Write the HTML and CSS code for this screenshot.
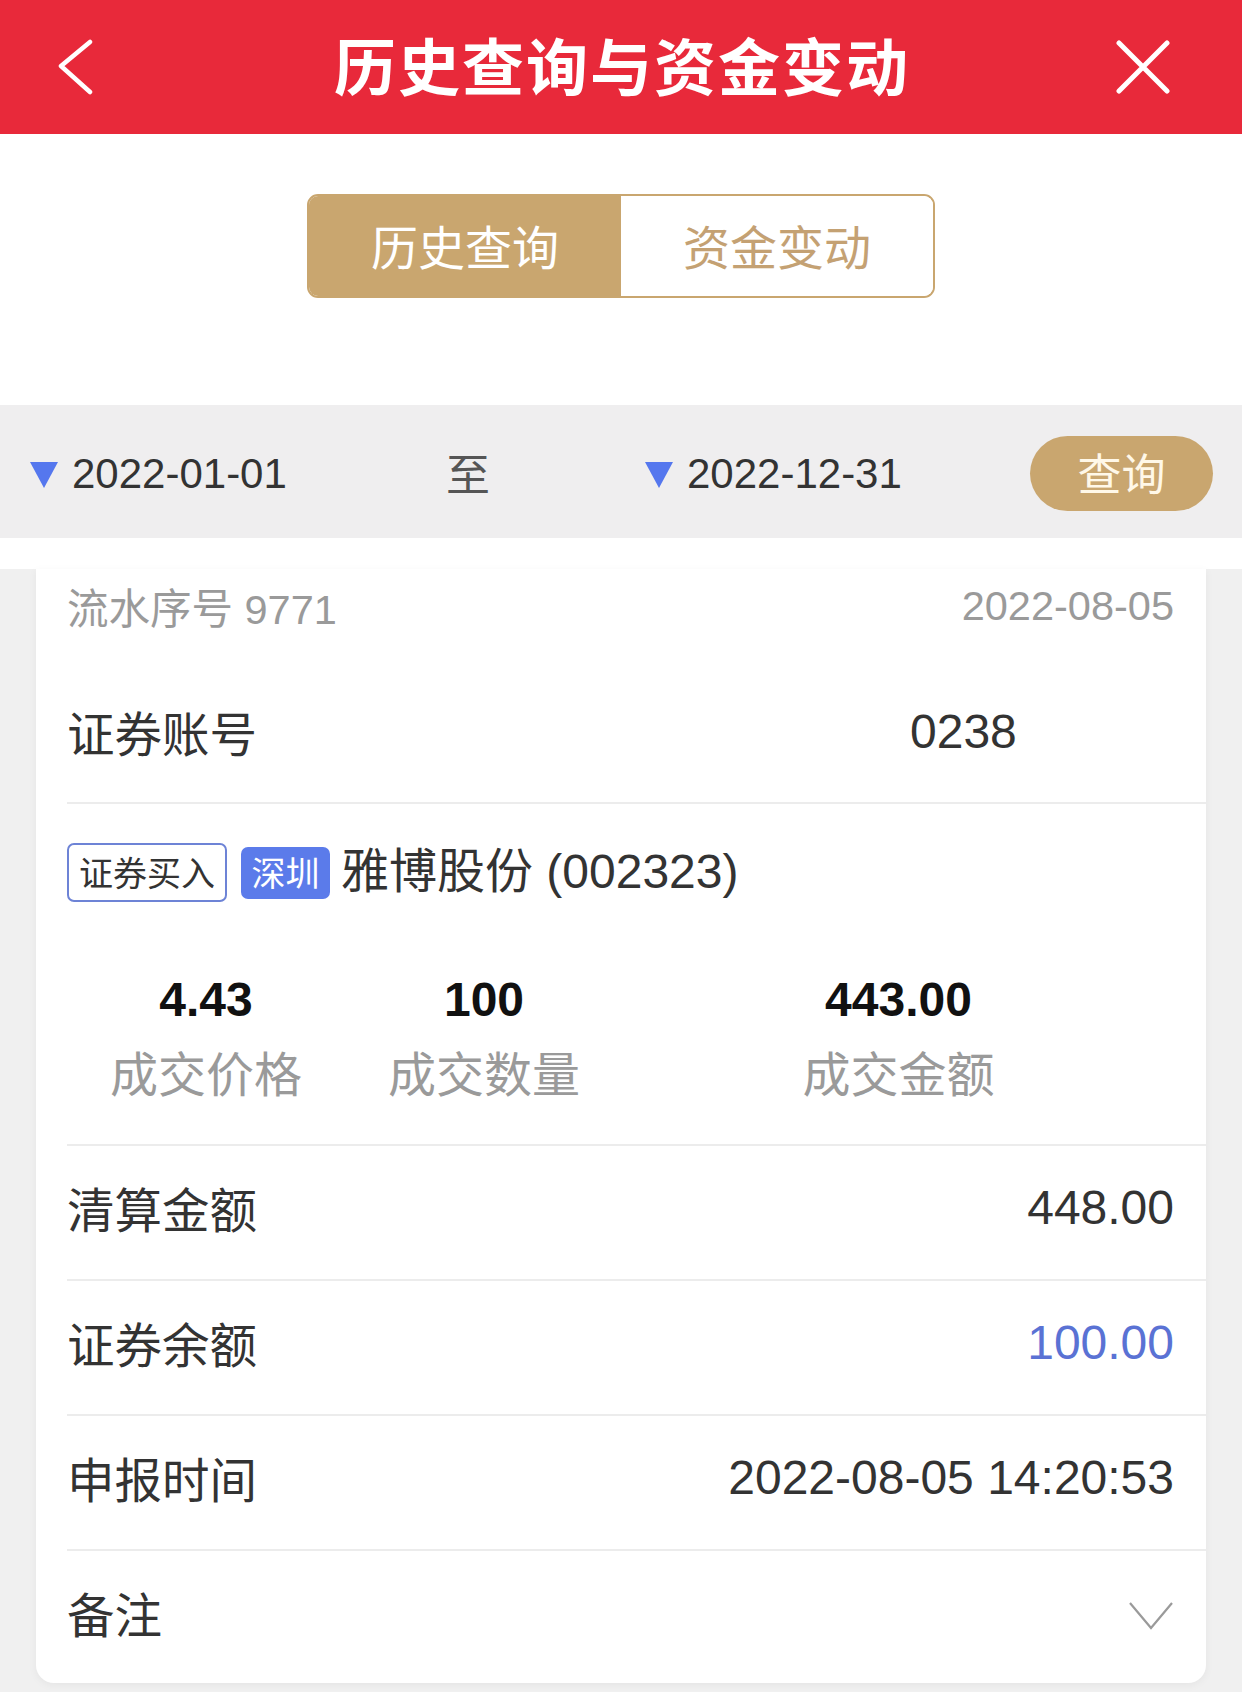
FILE: index.html
```html
<!DOCTYPE html>
<html lang="zh-CN">
<head>
<meta charset="utf-8">
<title>历史查询与资金变动</title>
<link rel="stylesheet" href="styles.css">
</head>
<body>
<header class="topbar">
  <span class="icon-btn back">
    <svg width="40" height="56" viewBox="0 0 40 56"><path d="M33 3 L4 27 L33 53" fill="none" stroke="#fff" stroke-width="4.5" stroke-linecap="round" stroke-linejoin="round"/></svg>
  </span>
  <h1 class="title">历史查询与资金变动</h1>
  <span class="icon-btn close">
    <svg width="54" height="54" viewBox="0 0 54 54"><path d="M3 3 L51 51 M51 3 L3 51" fill="none" stroke="#fff" stroke-width="5" stroke-linecap="round"/></svg>
  </span>
</header>

<section class="seg-wrap">
  <div class="segment">
    <div class="seg-item active">历史查询</div>
    <div class="seg-item">资金变动</div>
  </div>
</section>

<section class="filter">
  <div class="date-pick"><span class="tri"></span><span class="date">2022-01-01</span></div>
  <div class="to">至</div>
  <div class="date-pick"><span class="tri"></span><span class="date">2022-12-31</span></div>
  <div class="query-btn">查询</div>
</section>

<div class="spacer"></div>

<main class="list">
  <article class="card">
    <div class="card-head">
      <span>流水序号 9771</span>
      <span>2022-08-05</span>
    </div>
    <div class="row account">
      <span class="label">证券账号</span>
      <span class="value">0238</span>
    </div>
    <div class="row stock">
      <div class="stock-line">
        <span class="tag tag-outline">证券买入</span>
        <span class="tag tag-fill">深圳</span>
        <span class="stock-name">雅博股份 (002323)</span>
      </div>
      <div class="stats">
        <div class="stat"><div class="num">4.43</div><div class="cap">成交价格</div></div>
        <div class="stat"><div class="num">100</div><div class="cap">成交数量</div></div>
        <div class="stat wide"><div class="num">443.00</div><div class="cap">成交金额</div></div>
      </div>
    </div>
    <div class="row line">
      <span class="label">清算金额</span>
      <span class="value">448.00</span>
    </div>
    <div class="row line">
      <span class="label">证券余额</span>
      <span class="value blue">100.00</span>
    </div>
    <div class="row line">
      <span class="label">申报时间</span>
      <span class="value">2022-08-05 14:20:53</span>
    </div>
    <div class="row line last">
      <span class="label">备注</span>
      <svg class="chev" width="46" height="30" viewBox="0 0 46 30"><path d="M2 2 L23 27 L44 2" fill="none" stroke="#9a9a9a" stroke-width="2.2"/></svg>
    </div>
  </article>
</main>
</body>
</html>
```

FILE: styles.css
```css
* { box-sizing: border-box; }
html, body { margin: 0; padding: 0; }
body {
  width: 1242px;
  height: 1692px;
  overflow: hidden;
  background: #fff;
  font-family: "Liberation Sans", "Noto Sans CJK SC", sans-serif;
  color: #333;
}

.topbar {
  height: 134px;
  background: #e8293a;
  display: grid;
  grid-template-columns: 1fr auto 1fr;
  align-items: center;
  padding: 0 57px;
}
.icon-btn { display: flex; }
.back { justify-self: start; }
.close { justify-self: end; margin-right: 15px; }
.title {
  margin: 0;
  color: #fff;
  font-family: "Noto Sans CJK SC", sans-serif;
  font-size: 62px;
  font-weight: 700;
  letter-spacing: 2px;
  text-indent: 2px;
  line-height: 1;
  padding-bottom: 6px;
}

.seg-wrap {
  height: 271px;
  padding-top: 60px;
  display: flex;
  justify-content: center;
  align-items: flex-start;
}
.segment {
  width: 628px;
  height: 104px;
  border: 2px solid #c9a66f;
  border-radius: 11px;
  overflow: hidden;
  display: flex;
}
.seg-item {
  flex: 1;
  display: flex;
  align-items: center;
  justify-content: center;
  font-family: "Noto Sans CJK SC", sans-serif;
  font-size: 47px;
  color: #c4a173;
  background: #fff;
  padding-bottom: 4px;
}
.seg-item.active {
  background: #c9a66f;
  color: #fff;
}

.filter {
  height: 133px;
  background: #efeeef;
  display: grid;
  grid-template-columns: 416px 199px 1fr 183px;
  align-items: center;
  padding: 4px 29px 0 30px;
}
.date-pick { display: flex; align-items: center; gap: 14px; }
.tri {
  width: 0; height: 0;
  border-left: 14px solid transparent;
  border-right: 14px solid transparent;
  border-top: 26px solid #5577ee;
  margin-top: 2px;
}
.date { font-size: 42px; color: #333; }
.to {
  font-family: "Noto Sans CJK SC", sans-serif;
  font-size: 44px;
  color: #555;
  padding-bottom: 4px;
}
.query-btn {
  height: 75px;
  border-radius: 38px;
  background: #c9a66f;
  color: #fff8e8;
  font-family: "Noto Sans CJK SC", sans-serif;
  font-size: 44px;
  display: flex;
  align-items: center;
  justify-content: center;
  padding-bottom: 4px;
}

.spacer { height: 31px; background: #fff; }

.list {
  background: #f0f0f0;
  padding: 0 36px 9px;
}
.card {
  background: #fff;
  border-radius: 0 0 18px 18px;
  box-shadow: 0 2px 8px rgba(0,0,0,0.05);
}
.card-head {
  height: 97px;
  padding: 0 32px 24px 31px;
  display: flex;
  justify-content: space-between;
  align-items: center;
  font-size: 41.5px;
  color: #9a9a9a;
}

.row {
  margin-left: 31px;
  padding-right: 32px;
  border-bottom: 2px solid #ececec;
}
.label {
  font-family: "Noto Sans CJK SC", sans-serif;
  font-size: 47.5px;
  color: #333;
}
.value { font-size: 48px; color: #333; }
.value.blue { color: #5a72d4; }

.account {
  height: 138px;
  padding-bottom: 6px;
  display: grid;
  grid-template-columns: 843px 1fr;
  align-items: center;
}

.stock {
  height: 342px;
  padding-top: 39px;
}
.stock-line {
  display: flex;
  align-items: center;
  height: 59px;
}
.tag {
  font-family: "Noto Sans CJK SC", sans-serif;
  font-size: 34px;
  border-radius: 7px;
  display: flex;
  align-items: center;
  justify-content: center;
  padding-bottom: 3px;
}
.tag-outline {
  width: 160px;
  height: 59px;
  border: 2px solid #6d83d6;
  color: #333;
}
.tag-fill {
  width: 89px;
  height: 52px;
  margin-left: 14px;
  background: #5b7bea;
  color: #fff;
}
.stock-name {
  margin-left: 11px;
  font-size: 48px;
  color: #333;
  margin-top: -12px;
}
.stats {
  display: flex;
  margin-top: 73px;
}
.stat {
  width: 278px;
  display: flex;
  flex-direction: column;
  align-items: center;
}
.stat.wide { flex: 1; }
.num {
  font-size: 48px;
  font-weight: 700;
  color: #111;
  height: 50px;
  line-height: 50px;
}
.cap {
  margin-top: 18px;
  font-family: "Noto Sans CJK SC", sans-serif;
  font-size: 48px;
  color: #9a9a9a;
  height: 56px;
  line-height: 56px;
}

.line {
  height: 135px;
  padding-bottom: 10px;
  display: flex;
  align-items: center;
  justify-content: space-between;
}
.line.last {
  height: 132px;
  border-bottom: none;
}
.chev { display: block; margin-top: 8px; }
```
